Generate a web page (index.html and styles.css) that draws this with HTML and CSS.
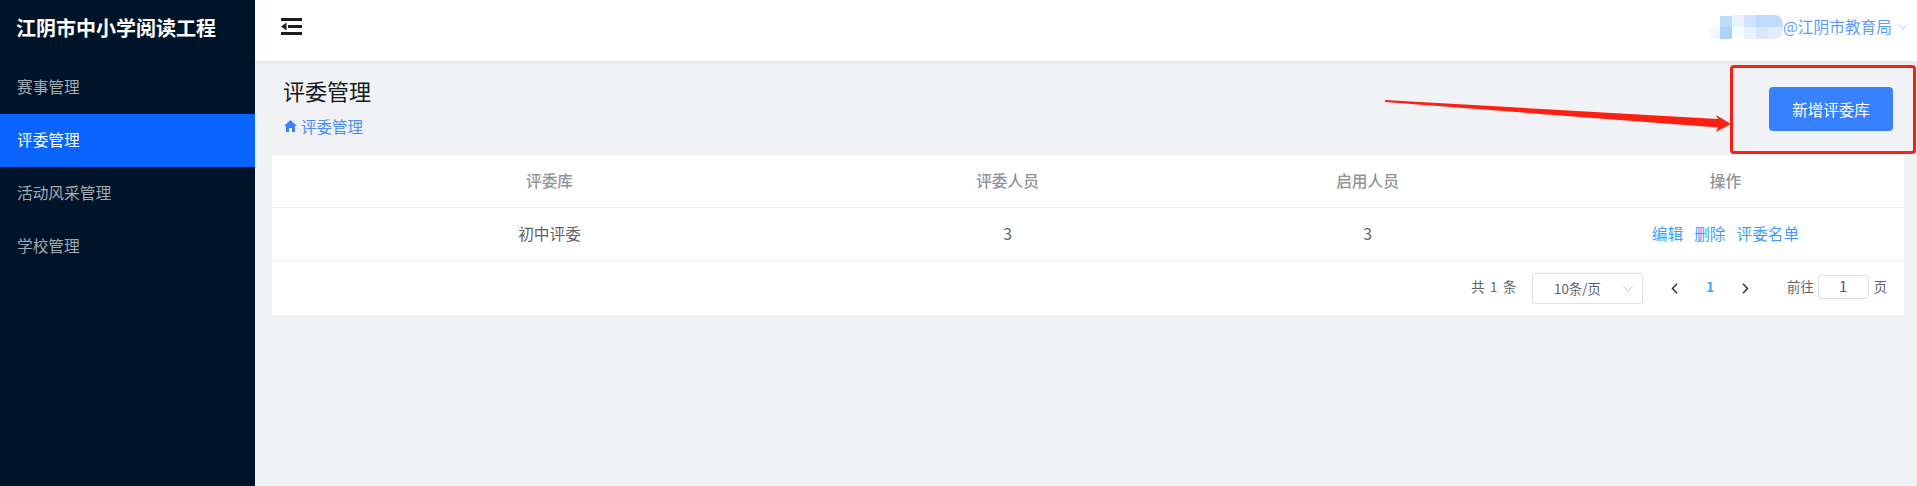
FILE: index.html
```html
<!DOCTYPE html>
<html lang="zh-CN">
<head>
<meta charset="utf-8">
<title>评委管理</title>
<link rel="stylesheet" href="styles.css">
</head>
<body>
<div class="app">
  <aside class="sidebar">
    <div class="brand">江阴市中小学阅读工程</div>
    <nav class="menu">
      <a class="menu-item">赛事管理</a>
      <a class="menu-item active">评委管理</a>
      <a class="menu-item">活动风采管理</a>
      <a class="menu-item">学校管理</a>
    </nav>
  </aside>
  <main class="main">
    <header class="topbar">
      <svg class="fold" width="21" height="17" viewBox="0 0 21 17"><path d="M0 0h21v3H0zM0 14h21v3H0zM7 7h14v3H7zM5.500 4.500v8L0 8.500z" fill="#1d1d1f"/></svg>
      <div class="user">
        <svg class="mosaic" width="74" height="24" viewBox="0 0 74 24">
          <rect x="11" y="1" width="12" height="12" fill="#bcdcff"/>
          <rect x="23" y="0" width="12" height="12" fill="#e9f2ff"/>
          <rect x="35" y="0" width="12" height="12" fill="#cfe3ff"/>
          <rect x="47" y="0" width="12" height="12" fill="#c2daff"/>
          <path d="M59 0h7q8 0 8 12H59z" fill="#c2dcff"/>
          <rect x="0" y="12" width="11" height="12" fill="#f4f8ff"/>
          <rect x="11" y="12" width="12" height="12" fill="#aed2ff"/>
          <rect x="23" y="12" width="12" height="12" fill="#f8fbff"/>
          <rect x="35" y="12" width="12" height="12" fill="#e8f1ff"/>
          <rect x="47" y="12" width="12" height="12" fill="#d9e8ff"/>
          <path d="M59 12h15q0 12-8 12h-7z" fill="#e2edff"/>
        </svg>
        <span class="user-name">@江阴市教育局</span>
        <svg class="user-caret" width="10" height="6" viewBox="0 0 10 6"><path d="M.5.500 5 5 9.500.5" fill="none" stroke="#a9c9f5" stroke-width="1"/></svg>
      </div>
    </header>
    <section class="content">
      <div class="page-head">
        <div class="page-titles">
          <h1 class="page-title">评委管理</h1>
          <div class="crumb">
            <svg width="13" height="12" viewBox="0 0 13 12"><path d="M6.500 0 13 6h-2v6H8V8H5v4H2V6H0z" fill="#3f7fff"/></svg>
            <span>评委管理</span>
          </div>
        </div>
        <button class="add-btn">新增评委库</button>
      </div>
      <div class="panel">
        <div class="row head">
          <div>评委库</div><div>评委人员</div><div>启用人员</div><div>操作</div>
        </div>
        <div class="row body">
          <div>初中评委</div><div>3</div><div>3</div>
          <div class="actions"><a>编辑</a><a>删除</a><a>评委名单</a></div>
        </div>
        <div class="pager">
          <span class="total">共 1 条</span>
          <div class="size">10条/页<svg width="10" height="6" viewBox="0 0 10 6"><path d="M.5.500 5 5 9.500.5" fill="none" stroke="#c0c4cc"/></svg></div>
          <svg class="chev" width="7" height="11" viewBox="0 0 7 11"><path d="M6 .8 1.500 5.500 6 10.200" fill="none" stroke="#303133" stroke-width="1.500"/></svg>
          <span class="cur">1</span>
          <svg class="chev" width="7" height="11" viewBox="0 0 7 11"><path d="M1 .8 5.500 5.500 1 10.200" fill="none" stroke="#303133" stroke-width="1.500"/></svg>
          <span class="goto">前往</span>
          <span class="jump">1</span>
          <span class="page-unit">页</span>
        </div>
      </div>
    </section>
  </main>
</div>
<div class="callout"></div>
<svg class="arrow" width="350" height="36" viewBox="0 0 350 36"><path d="M0 0 333 19 331 15 346 24 331 32 333 27.500 0 2z" fill="#fb2012"/></svg>
</body>
</html>
```
FILE: styles.css
```css
* { box-sizing: border-box; }
html, body { margin: 0; height: 100%; overflow: hidden; }
body {
  position: relative;
  font-family: "Noto Sans CJK SC", "Liberation Sans", sans-serif;
  background: #f0f2f5;
}
.app { display: flex; height: 486px; }

.sidebar { width: 255px; flex: none; background: #001429; }
.brand {
  height: 61px;
  padding-left: 16px;
  line-height: 56px;
  font-size: 20px;
  font-weight: 700;
  color: #fff;
  white-space: nowrap;
}
.menu-item {
  display: block;
  height: 53px;
  padding-left: 17px;
  line-height: 51px;
  font-size: 15.700px;
  color: #a3abb3;
}
.menu-item.active { background: #0a64ff; color: #fff; }

.main { flex: 1; min-width: 0; display: flex; flex-direction: column; }
.topbar {
  height: 61px;
  flex: none;
  background: #fff;
  box-shadow: 0 1px 4px rgba(0, 21, 41, .08);
  display: flex;
  align-items: center;
  justify-content: space-between;
  padding: 0 9px 0 26px;
  position: relative;
}
.fold { margin-top: -8px; }
.user { display: flex; align-items: center; margin-top: -8px; }
.user-name { font-size: 15.700px; color: #5a9cf8; line-height: 24px; }
.user-caret { margin-left: 6px; }

.content { flex: 1; padding: 0 13px 0 17px; }
.page-head {
  height: 94px;
  display: flex;
  justify-content: space-between;
  padding-left: 11px;
}
.page-title {
  margin: 13px 0 0;
  font-size: 22px;
  font-weight: 400;
  line-height: 32px;
  color: #17171a;
}
.crumb {
  display: flex;
  align-items: center;
  gap: 4px;
  margin-top: 8px;
  margin-left: 1px;
  font-size: 15.500px;
  line-height: 24px;
  color: #4a8bf8;
}
.add-btn {
  width: 124px;
  height: 44px;
  margin: 26px 11px 0 0;
  border: 0;
  border-radius: 4px;
  background: #3780ff;
  color: #fff;
  font: 15.500px "Noto Sans CJK SC", "Liberation Sans", sans-serif;
}

.panel { background: #fff; height: 160px; }
.row {
  display: grid;
  grid-template-columns: 555px 361px 359px 357px;
  height: 53px;
  padding-bottom: 1px;
  border-bottom: 1px solid #ebeef5;
  align-items: center;
  text-align: center;
  font-size: 15.700px;
}
.row.head { color: #909399; font-weight: 500; }
.row.body { color: #606266; }
.actions { display: flex; justify-content: center; gap: 11px; color: #3f9bff; }

.pager {
  height: 54px;
  display: flex;
  align-items: center;
  padding-right: 17px;
  justify-content: flex-end;
  font-size: 13.300px;
  color: #606266;
}
.total { margin-right: 15px; margin-top: -4px; word-spacing: 1px; letter-spacing: .8px; }
.size {
  width: 111px;
  height: 31px;
  padding-left: 21px;
  border: 1px solid #dcdfe6;
  border-radius: 3px;
  display: flex;
  align-items: center;
  justify-content: space-between;
  padding-right: 9px;
  margin-right: 28px;
  margin-top: 1px;
}
.cur { width: 64px; text-align: center; color: #409eff; font-weight: 700; margin-top: -3px; }
.goto { margin-left: 38px; margin-top: -3px; }
.jump {
  width: 51px;
  height: 24px;
  margin: -3px 5px 0 4px;
  border: 1px solid #dcdfe6;
  border-radius: 3px;
  text-align: center;
  font-size: 15px;
  line-height: 20px;
}
.page-unit { margin-top: -3px; }

.callout {
  position: absolute;
  left: 1730px;
  top: 65px;
  width: 186px;
  height: 89px;
  border: 3px solid #fb2012;
  border-radius: 4px;
}
.arrow { position: absolute; left: 1385px; top: 100px; }
```
